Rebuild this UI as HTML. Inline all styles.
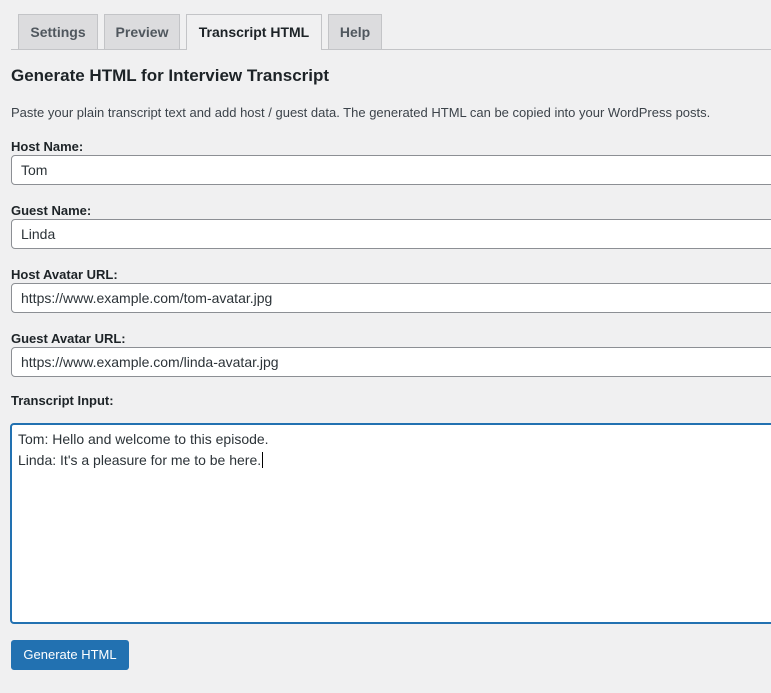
<!DOCTYPE html>
<html><head><meta charset="utf-8"><style>
body{margin:0;background:#f0f0f1;font-family:"Liberation Sans",sans-serif;color:#1d2327;width:771px;height:693px;overflow:hidden;position:relative}
.tabline{position:absolute;left:11px;right:0;top:49px;border-top:1px solid #c3c4c7}
.tab{position:absolute;top:14px;height:34px;border:1px solid #c3c4c7;border-bottom:none;background:#dcdcde;color:#50575e;font-weight:bold;font-size:14px;line-height:34px;text-align:center;box-sizing:content-box}
.tab.act{background:#f0f0f1;color:#1d2327;height:35px}
h2{position:absolute;left:11px;top:66px;margin:0;font-size:17px;font-weight:bold;color:#1d2327}
p{position:absolute;left:11px;top:105px;margin:0;font-size:13px;color:#3c434a}
.lbl{position:absolute;left:11px;font-size:13px;font-weight:bold;color:#1d2327}
.inp{position:absolute;left:11px;width:780px;height:28px;border:1px solid #8c8f94;border-radius:4px;background:#fff;font-size:14px;line-height:28px;padding-left:9px;box-sizing:content-box;color:#2c3338}
.ta{position:absolute;left:10px;top:423px;width:780px;height:193px;border:2px solid #2271b1;border-radius:4px;background:#fff;font-size:14px;line-height:21px;padding:4px 0 0 6px;color:#2c3338}
.btn{position:absolute;left:11px;top:640px;width:118px;height:30px;background:#2271b1;border-radius:3px;color:#fff;font-size:13px;line-height:30px;text-align:center}
</style></head><body>
<div class="tabline"></div>
<div class="tab" style="left:18px;width:78px">Settings</div>
<div class="tab" style="left:104px;width:74px">Preview</div>
<div class="tab act" style="left:186px;width:134px">Transcript HTML</div>
<div class="tab" style="left:328px;width:52px">Help</div>
<h2>Generate HTML for Interview Transcript</h2>
<p>Paste your plain transcript text and add host / guest data. The generated HTML can be copied into your WordPress posts.</p>
<div class="lbl" style="top:139px">Host Name:</div>
<div class="inp" style="top:155px">Tom</div>
<div class="lbl" style="top:203px">Guest Name:</div>
<div class="inp" style="top:219px">Linda</div>
<div class="lbl" style="top:267px">Host Avatar URL:</div>
<div class="inp" style="top:283px">https://www.example.com/tom-avatar.jpg</div>
<div class="lbl" style="top:331px">Guest Avatar URL:</div>
<div class="inp" style="top:347px">https://www.example.com/linda-avatar.jpg</div>
<div class="lbl" style="top:393px">Transcript Input:</div>
<div class="ta">Tom: Hello and welcome to this episode.<br>Linda: It's a pleasure for me to be here.<span style="border-left:1px solid #000;margin-left:1px"></span></div>
<div class="btn">Generate HTML</div>
</body></html>
